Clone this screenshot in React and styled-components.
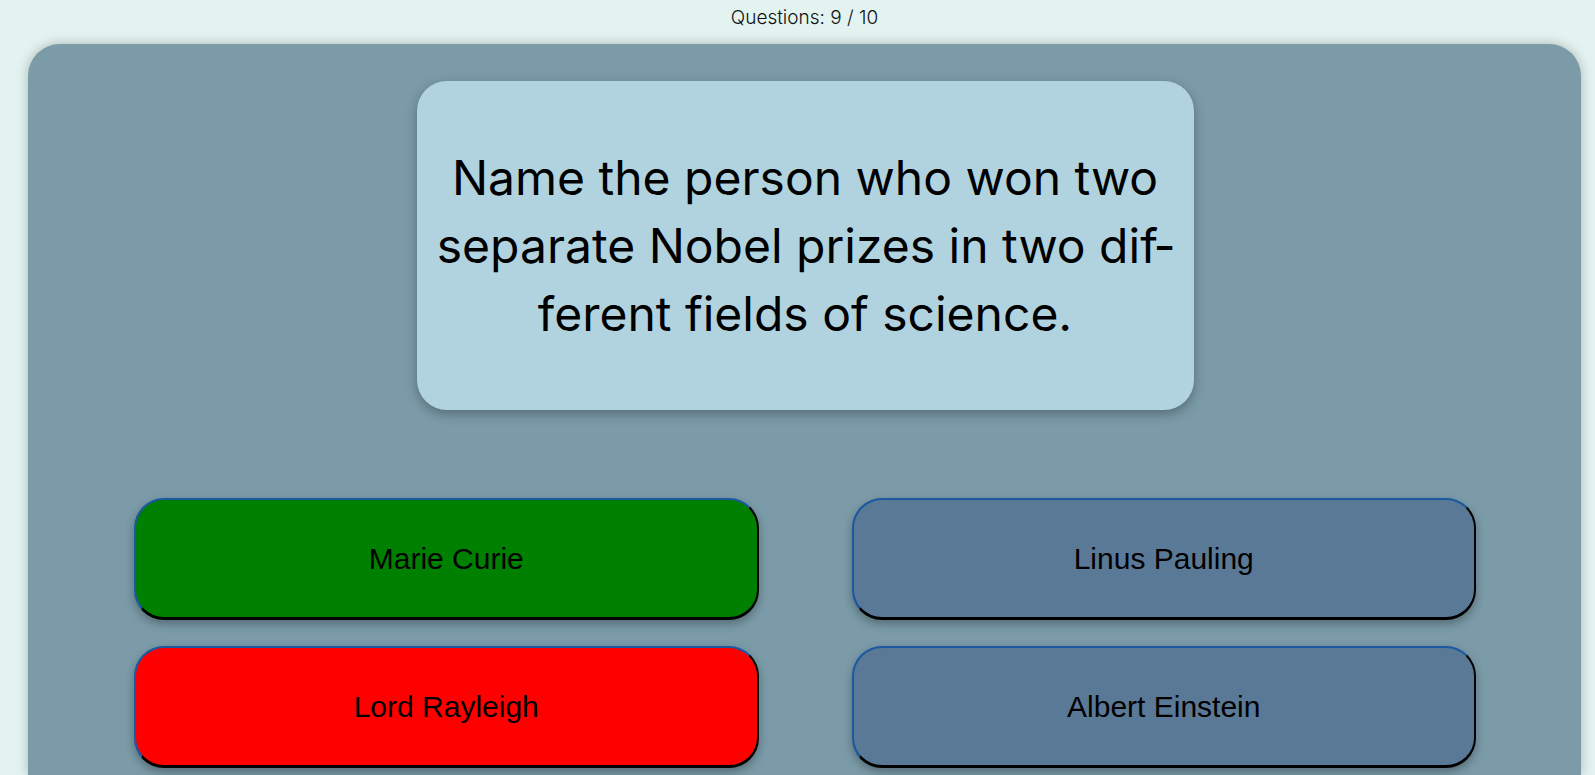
import React from 'react';
import styled, { createGlobalStyle } from 'styled-components';

const GlobalStyle = createGlobalStyle`
  html, body {
    margin: 0;
    padding: 0;
    background: #e3f3ef;
    overflow: hidden;
  }
  body {
    font-family: Inter, "Noto Sans", sans-serif;
  }
`;

const answers = [
  { label: 'Marie Curie', state: 'correct' },
  { label: 'Linus Pauling', state: 'idle' },
  { label: 'Lord Rayleigh', state: 'wrong' },
  { label: 'Albert Einstein', state: 'idle' },
];

const fills = {
  correct: '#008000',
  wrong: '#ff0000',
  idle: '#5a7997',
};

const App = () => (
  <>
    <GlobalStyle />
    <Page>
      <Counter>Questions: 9 / 10</Counter>
      <Card>
        <QuestionBox lang="en">
          <QuestionText>
            Name the person who won two separate Nobel prizes in two dif{'\u00AD'}ferent fields of science.
          </QuestionText>
        </QuestionBox>
        <AnswerGrid>
          {answers.map(a => (
            <AnswerButton key={a.label} $state={a.state}>
              {a.label}
            </AnswerButton>
          ))}
        </AnswerGrid>
      </Card>
    </Page>
  </>
);

export default App;

const Page = styled.div`
  height: 775px;
  display: flex;
  flex-direction: column;
`;

const Counter = styled.div`
  height: 44px;
  display: flex;
  justify-content: center;
  padding-top: 6px;
  box-sizing: border-box;
  padding-left: 14px;
  font-size: 19px;
  font-weight: 300;
  color: #111;
`;

const Card = styled.main`
  flex: 1;
  margin: 0 14px 0 28px;
  background: #7b9ba8;
  border-radius: 32px 32px 0 0;
  box-shadow: 0 0 12px rgba(0, 0, 0, 0.25);
  padding: 37px 105px 0 106px;
  display: flex;
  flex-direction: column;
  align-items: center;
`;

const QuestionBox = styled.section`
  width: 777px;
  height: 329px;
  box-sizing: border-box;
  background: #b1d3df;
  border-radius: 30px;
  box-shadow: 0 4px 12px rgba(0, 0, 0, 0.3);
  display: flex;
  align-items: center;
  justify-content: center;
  padding: 0 18px;
  margin-bottom: 88px;
`;

const QuestionText = styled.p`
  margin: 0;
  font-size: 48px;
  line-height: 68px;
  text-align: center;
  color: #000;
  hyphens: manual;
`;

const AnswerGrid = styled.div`
  width: 100%;
  display: grid;
  grid-template-columns: 1fr 1fr;
  column-gap: 93px;
  row-gap: 26px;
`;

const AnswerButton = styled.button`
  height: 122px;
  border-radius: 30px;
  border-style: solid;
  border-width: 2px 2.5px 3px 2px;
  border-color: #1b58a0 #000 #000 #1b58a0;
  background: ${p => fills[p.$state]};
  box-shadow: 0 4px 10px rgba(0, 0, 0, 0.3);
  font-family: "Liberation Sans", Arial, sans-serif;
  font-size: 30px;
  color: #000;
  cursor: pointer;
`;
